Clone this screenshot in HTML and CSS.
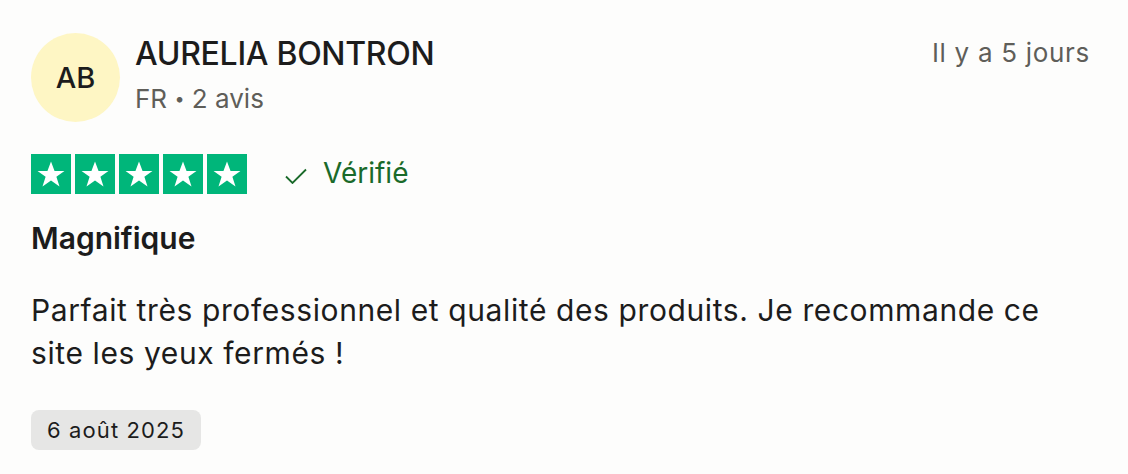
FILE: index.html
```html
<!DOCTYPE html>
<html lang="fr">
<head>
<meta charset="UTF-8">
<meta name="viewport" content="width=device-width, initial-scale=1.0">
<title>Avis</title>
<link rel="stylesheet" href="styles.css">
</head>
<body>

<div class="review">
  <div class="review-head">
    <div class="avatar">AB</div>
    <div class="author">
      <div class="author-name">AURELIA BONTRON</div>
      <div class="author-meta">FR <span class="dot">•</span> 2 avis</div>
    </div>
    <div class="review-age">Il y a 5 jours</div>
  </div>

  <div class="rating-row">
    <div class="stars">
      <span class="star-box"><svg viewBox="0 0 24 24"><path d="M12 3.2l2.5 6.6h7l-5.7 4.2 2.2 6.8L12 16.6l-6 4.2 2.2-6.8L2.5 9.8h7z" fill="#fff"/></svg></span>
      <span class="star-box"><svg viewBox="0 0 24 24"><path d="M12 3.2l2.5 6.6h7l-5.7 4.2 2.2 6.8L12 16.6l-6 4.2 2.2-6.8L2.5 9.8h7z" fill="#fff"/></svg></span>
      <span class="star-box"><svg viewBox="0 0 24 24"><path d="M12 3.2l2.5 6.6h7l-5.7 4.2 2.2 6.8L12 16.6l-6 4.2 2.2-6.8L2.5 9.8h7z" fill="#fff"/></svg></span>
      <span class="star-box"><svg viewBox="0 0 24 24"><path d="M12 3.2l2.5 6.6h7l-5.7 4.2 2.2 6.8L12 16.6l-6 4.2 2.2-6.8L2.5 9.8h7z" fill="#fff"/></svg></span>
      <span class="star-box"><svg viewBox="0 0 24 24"><path d="M12 3.2l2.5 6.6h7l-5.7 4.2 2.2 6.8L12 16.6l-6 4.2 2.2-6.8L2.5 9.8h7z" fill="#fff"/></svg></span>
    </div>
    <div class="verified">
      <svg class="check" viewBox="0 0 22 16"><path d="M1 8.5l6.5 6.5L21 1.5" fill="none" stroke="#1a6a2a" stroke-width="1.8"/></svg>
      <span>Vérifié</span>
    </div>
  </div>

  <h2 class="review-title">Magnifique</h2>
  <p class="review-text">Parfait très professionnel et qualité des produits. Je recommande ce site les yeux fermés !</p>
  <div class="review-date">6 août 2025</div>
</div>

</body>
</html>
```

FILE: styles.css
```css
/* Review card */
body {
  margin: 0;
  background-color: #fdfdfc;
  font-family: Inter, "Noto Sans", sans-serif;
  color: #1c1c1c;
}
.review {
  padding: 33px 38px 0 31px;
}
.review-head {
  display: flex;
  align-items: flex-start;
}
.avatar {
  width: 89px;
  height: 89px;
  border-radius: 50%;
  background-color: #fef6c4;
  display: flex;
  align-items: center;
  justify-content: center;
  font-size: 29px;
  font-weight: 500;
  color: #1c1c1c;
  flex-shrink: 0;
}
.author {
  margin-left: 15px;
  padding-top: 3px;
}
.author-name {
  font-size: 32px;
  font-weight: 500;
  line-height: 36px;
  letter-spacing: -0.3px;
}
.author-meta {
  font-size: 26px;
  color: #5f5e59;
  line-height: 36px;
  margin-top: 9px;
}
.dot {
  font-size: 18px;
  vertical-align: 3px;
}
.review-age {
  margin-left: auto;
  font-size: 26px;
  letter-spacing: 0.7px;
  color: #5f5e59;
  line-height: 36px;
  padding-top: 2px;
}
.rating-row {
  display: flex;
  align-items: center;
  margin-top: 32px;
}
.stars {
  display: flex;
  gap: 4px;
}
.star-box {
  width: 40px;
  height: 40px;
  background-color: #00b67a;
  display: flex;
  align-items: center;
  justify-content: center;
}
.star-box svg {
  width: 34px;
  height: 34px;
}
.verified {
  display: flex;
  align-items: center;
  margin-left: 38px;
  font-size: 28px;
  line-height: 36px;
  color: #1a6a2a;
  margin-bottom: 3px;
}
.check {
  width: 22px;
  height: 16px;
  margin-right: 16px;
  margin-top: 6px;
}
.review-title {
  font-size: 30px;
  font-weight: 600;
  margin: 26px 0 0;
  line-height: 36px;
}
.review-text {
  font-size: 30px;
  line-height: 43px;
  letter-spacing: 0.6px;
  margin: 33px 0 0;
  max-width: 1040px;
}
.review-date {
  width: fit-content;
  margin-top: 35px;
  background-color: #e6e6e5;
  border-radius: 8px;
  font-size: 22px;
  letter-spacing: 1.1px;
  line-height: 40px;
  padding: 0 16px;
}
```
